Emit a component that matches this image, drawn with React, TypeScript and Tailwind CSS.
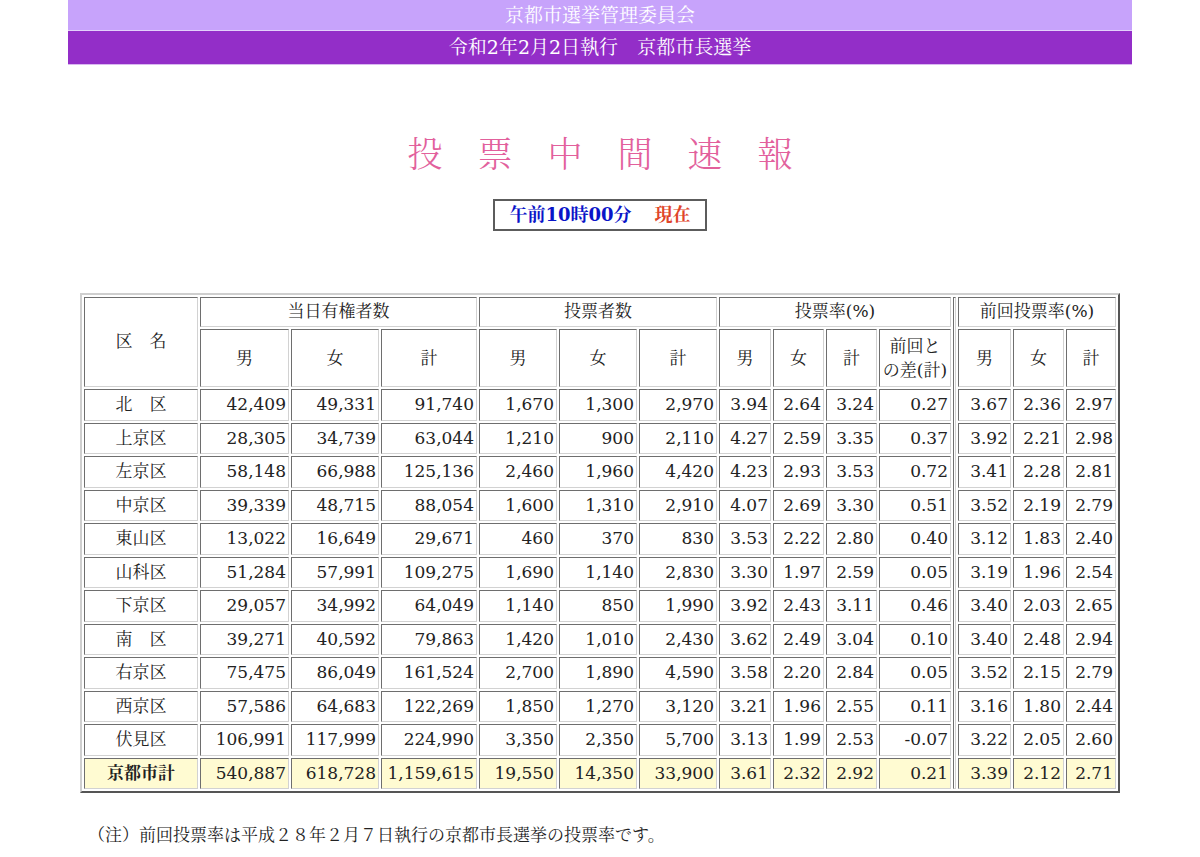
import React from "react";

const rows: string[][] = [
  ["北　区", "42,409", "49,331", "91,740", "1,670", "1,300", "2,970", "3.94", "2.64", "3.24", "0.27", "3.67", "2.36", "2.97"],
  ["上京区", "28,305", "34,739", "63,044", "1,210", "900", "2,110", "4.27", "2.59", "3.35", "0.37", "3.92", "2.21", "2.98"],
  ["左京区", "58,148", "66,988", "125,136", "2,460", "1,960", "4,420", "4.23", "2.93", "3.53", "0.72", "3.41", "2.28", "2.81"],
  ["中京区", "39,339", "48,715", "88,054", "1,600", "1,310", "2,910", "4.07", "2.69", "3.30", "0.51", "3.52", "2.19", "2.79"],
  ["東山区", "13,022", "16,649", "29,671", "460", "370", "830", "3.53", "2.22", "2.80", "0.40", "3.12", "1.83", "2.40"],
  ["山科区", "51,284", "57,991", "109,275", "1,690", "1,140", "2,830", "3.30", "1.97", "2.59", "0.05", "3.19", "1.96", "2.54"],
  ["下京区", "29,057", "34,992", "64,049", "1,140", "850", "1,990", "3.92", "2.43", "3.11", "0.46", "3.40", "2.03", "2.65"],
  ["南　区", "39,271", "40,592", "79,863", "1,420", "1,010", "2,430", "3.62", "2.49", "3.04", "0.10", "3.40", "2.48", "2.94"],
  ["右京区", "75,475", "86,049", "161,524", "2,700", "1,890", "4,590", "3.58", "2.20", "2.84", "0.05", "3.52", "2.15", "2.79"],
  ["西京区", "57,586", "64,683", "122,269", "1,850", "1,270", "3,120", "3.21", "1.96", "2.55", "0.11", "3.16", "1.80", "2.44"],
  ["伏見区", "106,991", "117,999", "224,990", "3,350", "2,350", "5,700", "3.13", "1.99", "2.53", "-0.07", "3.22", "2.05", "2.60"],
];

const total = ["京都市計", "540,887", "618,728", "1,159,615", "19,550", "14,350", "33,900", "3.61", "2.32", "2.92", "0.21", "3.39", "2.12", "2.71"];

const cell =
  "border border-t-[#6e6e6e] border-l-[#6e6e6e] border-r-[#d2d2d2] border-b-[#d2d2d2] p-0";

const widths = [
  "w-[89px]",
  "w-[88px]",
  "w-[96px]",
  "w-[78px]",
  "w-[78px]",
  "w-[78px]",
  "w-[52px]",
  "w-[51px]",
  "w-[51px]",
  "w-[72px]",
  "w-[53px]",
  "w-[51px]",
  "w-[50px]",
];

const subHeads = ["男", "女", "計", "男", "女", "計", "男", "女", "計", "", "男", "女", "計"];

export default function App() {
  return (
    <div className="w-[1200px] min-h-[857px] bg-white [font-family:'DejaVu_Serif','Noto_Serif_CJK_JP','Noto_Sans_CJK_JP',serif] text-[#222]">
      {/* header bands */}
      <div className="mx-auto w-[1064px] flex flex-col">
        <div className="h-[30px] bg-[#c7a3fb] flex items-center justify-center text-white text-[19px] leading-none">
          京都市選挙管理委員会
        </div>
        <div className="h-px bg-[#e2d0fc]" />
        <div className="h-[34px] bg-[#932ec8] flex items-center justify-center text-white text-[19px] leading-none border-b border-b-[#d9b8f0]">
          令和2年2月2日執行　京都市長選挙
        </div>
      </div>

      {/* title */}
      <div className="mt-[70px] text-center text-[35px] leading-[40px] text-[#e2609c] font-light">
        投　票　中　間　速　報
      </div>

      {/* time box */}
      <div className="mt-[24px] flex justify-center">
        <div className="w-[214px] h-[32px] border-2 border-[#5c5c5c] flex items-center justify-center text-[18px] font-bold leading-none">
          <span className="text-[#0a14c8]">午前10時00分</span>
          <span className="w-[23px]" />
          <span className="text-[#e0452a]">現在</span>
        </div>
      </div>

      {/* table */}
      <div className="mt-[62px] flex justify-center">
        <table className="border-separate border-spacing-[2px] border-2 border-t-[#cfcfcf] border-l-[#cfcfcf] border-r-[#555] border-b-[#555] text-[17px]">
          <tbody>
            <tr>
              <td rowSpan={2} className={`${cell} w-[114px] text-center font-normal`}>
                区　名
              </td>
              <td colSpan={3} className={`${cell} h-[30px] text-center`}>
                当日有権者数
              </td>
              <td colSpan={3} className={`${cell} text-center`}>
                投票者数
              </td>
              <td colSpan={4} className={`${cell} text-center`}>
                投票率(%)
              </td>
              <td rowSpan={14} className={`${cell} w-[3px] min-w-[3px]`} />
              <td colSpan={3} className={`${cell} text-center`}>
                前回投票率(%)
              </td>
            </tr>
            <tr>
              {subHeads.map((h, i) => (
                <td key={i} className={`${cell} ${widths[i]} h-[58px] text-center leading-[24px]`}>
                  {i === 9 ? (
                    <>
                      前回と
                      <br />
                      の差(計)
                    </>
                  ) : (
                    h
                  )}
                </td>
              ))}
            </tr>
            {rows.map((r, ri) => (
              <tr key={ri}>
                {r.map((v, ci) => (
                  <td
                    key={ci}
                    className={`${cell} h-[31.5px] leading-none ${ci === 0 ? "text-center" : "text-right pr-[2px]"}`}
                  >
                    {v}
                  </td>
                ))}
              </tr>
            ))}
            <tr>
              {total.map((v, ci) => (
                <td
                  key={ci}
                  className={`${cell} h-[31.5px] leading-none bg-[#fffbd2] ${ci === 0 ? "text-center font-bold" : "text-right pr-[2px]"}`}
                >
                  {v}
                </td>
              ))}
            </tr>
          </tbody>
        </table>
      </div>

      {/* footnote */}
      <div className="mt-[30px] pl-[88px] text-[17px] leading-[24px]">
        （注）前回投票率は平成２８年２月７日執行の京都市長選挙の投票率です。
      </div>
    </div>
  );
}
